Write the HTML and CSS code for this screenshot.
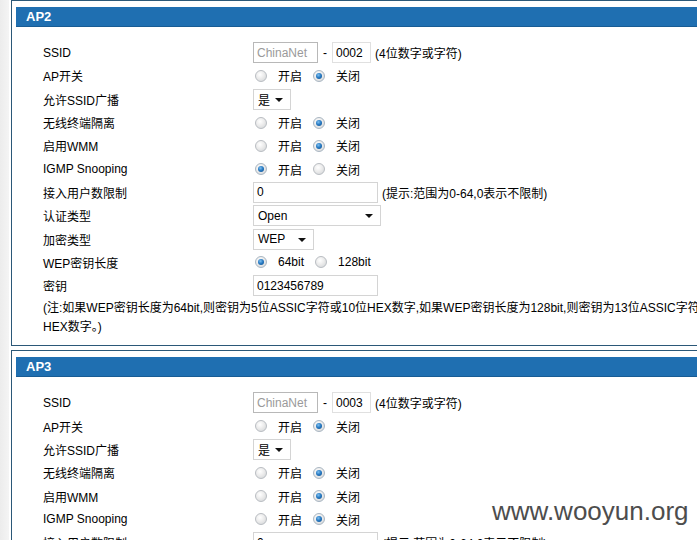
FILE: index.html
```html
<!DOCTYPE html>
<html lang="zh-CN">
<head>
<meta charset="utf-8">
<title>AP设置</title>
<link rel="stylesheet" href="styles.css">
</head>
<body>
<div class="page">
  <section class="panel">
    <h2 class="bar">AP2</h2>
    <div class="form">
      <div class="row"><span class="lbl">SSID</span><div class="ctl"><input class="txt pre" value="ChinaNet" readonly><span class="dash">-</span><input class="txt suf" value="0002"><span class="hint">(4位数字或字符)</span></div></div>
      <div class="row"><span class="lbl">AP开关</span><div class="ctl"><span class="radio"></span><span class="opt">开启</span><span class="radio on"></span><span class="opt">关闭</span></div></div>
      <div class="row"><span class="lbl">允许SSID广播</span><div class="ctl"><span class="sel s-yes">是<i class="arr"></i></span></div></div>
      <div class="row"><span class="lbl">无线终端隔离</span><div class="ctl"><span class="radio"></span><span class="opt">开启</span><span class="radio on"></span><span class="opt">关闭</span></div></div>
      <div class="row"><span class="lbl">启用WMM</span><div class="ctl"><span class="radio"></span><span class="opt">开启</span><span class="radio on"></span><span class="opt">关闭</span></div></div>
      <div class="row"><span class="lbl">IGMP Snooping</span><div class="ctl"><span class="radio on"></span><span class="opt">开启</span><span class="radio"></span><span class="opt">关闭</span></div></div>
      <div class="row"><span class="lbl">接入用户数限制</span><div class="ctl"><input class="txt wide" value="0"><span class="hint">(提示:范围为0-64,0表示不限制)</span></div></div>
      <div class="row"><span class="lbl">认证类型</span><div class="ctl"><span class="sel s-open">Open<i class="arr"></i></span></div></div>
      <div class="row"><span class="lbl">加密类型</span><div class="ctl"><span class="sel s-wep">WEP<i class="arr"></i></span></div></div>
      <div class="row"><span class="lbl">WEP密钥长度</span><div class="ctl"><span class="radio on"></span><span class="opt">64bit</span><span class="radio"></span><span class="opt">128bit</span></div></div>
      <div class="row"><span class="lbl">密钥</span><div class="ctl"><input class="txt wide" value="0123456789"></div></div>
      <p class="note">(注:如果WEP密钥长度为64bit,则密钥为5位ASSIC字符或10位HEX数字,如果WEP密钥长度为128bit,则密钥为13位ASSIC字符或26位<br>HEX数字。)</p>
    </div>
  </section>
  <section class="panel">
    <h2 class="bar">AP3</h2>
    <div class="form">
      <div class="row"><span class="lbl">SSID</span><div class="ctl"><input class="txt pre" value="ChinaNet" readonly><span class="dash">-</span><input class="txt suf" value="0003"><span class="hint">(4位数字或字符)</span></div></div>
      <div class="row"><span class="lbl">AP开关</span><div class="ctl"><span class="radio"></span><span class="opt">开启</span><span class="radio on"></span><span class="opt">关闭</span></div></div>
      <div class="row"><span class="lbl">允许SSID广播</span><div class="ctl"><span class="sel s-yes">是<i class="arr"></i></span></div></div>
      <div class="row"><span class="lbl">无线终端隔离</span><div class="ctl"><span class="radio"></span><span class="opt">开启</span><span class="radio on"></span><span class="opt">关闭</span></div></div>
      <div class="row"><span class="lbl">启用WMM</span><div class="ctl"><span class="radio"></span><span class="opt">开启</span><span class="radio on"></span><span class="opt">关闭</span></div></div>
      <div class="row"><span class="lbl">IGMP Snooping</span><div class="ctl"><span class="radio"></span><span class="opt">开启</span><span class="radio on"></span><span class="opt">关闭</span></div></div>
      <div class="row"><span class="lbl">接入用户数限制</span><div class="ctl"><input class="txt wide" value="0"><span class="hint">(提示:范围为0-64,0表示不限制)</span></div></div>
    </div>
  </section>
</div>
<div class="wm">www.wooyun.org</div>
</body>
</html>
```
FILE: styles.css
```css
html, body {
  margin: 0;
  padding: 0;
  overflow: hidden;
  background: #fff;
}
body {
  font-family: "Liberation Sans", "Noto Sans CJK SC", sans-serif;
  font-size: 12px;
  color: #000;
}
.page {
  width: 780px;
  padding-left: 11px;
  background: linear-gradient(to right, #ececec 0, #f4f4f4 9px, #fff 9px);
}
.panel {
  border: 1px solid #2b5878;
  padding: 6px 0 8px 4px;
  margin: 0 0 4px 0;
}
.bar {
  margin: 0;
  height: 20px;
  line-height: 20px;
  background: #1f6fb1;
  border-bottom: 1px solid #185c94;
  box-sizing: border-box;
  color: #fff;
  font-size: 13px;
  font-weight: bold;
  padding-left: 10px;
}
.form {
  padding: 14px 0 0 27px;
}
.row {
  display: flex;
  align-items: center;
  height: 23.3px;
}
.lbl {
  width: 210px;
  flex: none;
  white-space: nowrap;
}
.ctl {
  display: flex;
  align-items: center;
  white-space: nowrap;
}
.txt {
  box-sizing: border-box;
  height: 21px;
  margin: 0;
  padding: 0 3px;
  border: 1px solid #d4d4d4;
  font: 12px "Liberation Sans", "Noto Sans CJK SC", sans-serif;
  color: #000;
  background: #fff;
  outline: none;
}
.txt.pre {
  width: 65px;
  color: #9a9a9a;
  border-color: #b8b8b8;
}
.txt.suf {
  width: 39px;
  border-color: #e0e0e0;
}
.txt.wide {
  width: 125px;
}
.dash {
  margin: 0 5px 0 5px;
}
.hint {
  margin-left: 4px;
}
.radio {
  flex: none;
  box-sizing: border-box;
  width: 12px;
  height: 12px;
  border-radius: 50%;
  border: 1px solid #b9bdc2;
  background: radial-gradient(circle at 40% 35%, #ffffff 0, #ececec 45%, #cfd2d5 100%);
  margin-left: 2px;
  position: relative;
}
.radio.on {
  border-color: #a9b6c2;
}
.radio.on::after {
  content: "";
  position: absolute;
  left: 2px;
  top: 2px;
  width: 6px;
  height: 6px;
  border-radius: 50%;
  background: radial-gradient(circle at 40% 35%, #7fc0f0 0, #2a7cc4 45%, #0b4a88 100%);
}
.opt {
  margin-left: 11px;
  margin-right: 9px;
}
.sel {
  box-sizing: border-box;
  height: 21px;
  border: 1px solid #d4d4d4;
  display: flex;
  align-items: center;
  padding-left: 4px;
  position: relative;
  background: #fff;
}
.s-yes { width: 38px; }
.s-open { width: 128px; }
.s-wep { width: 61px; }
.arr {
  position: absolute;
  right: 7px;
  top: 8px;
  width: 0;
  height: 0;
  border-left: 4px solid transparent;
  border-right: 4px solid transparent;
  border-top: 4px solid #111;
}
.note {
  margin: 2px 0 0 0;
  line-height: 19px;
  white-space: nowrap;
}
.wm {
  position: absolute;
  left: 492px;
  top: 496px;
  font-family: "Liberation Sans", sans-serif;
  font-size: 26px;
  color: #4d4d4d;
  line-height: 30px;
}
```
